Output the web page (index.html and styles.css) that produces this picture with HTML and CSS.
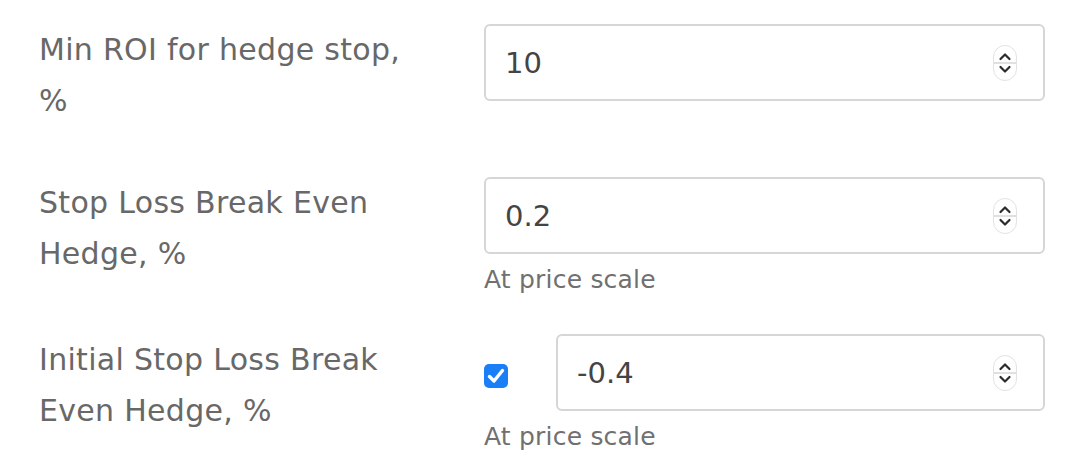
FILE: index.html
```html
<!DOCTYPE html>
<html lang="en">
<head>
<meta charset="utf-8">
<title>Hedge settings</title>
<link rel="stylesheet" href="styles.css">
</head>
<body>
<div class="form">
  <div class="row">
    <div class="label">Min ROI for hedge stop, %</div>
    <div class="control">
      <div class="field">
        <div class="input">
          <span class="value">10</span>
          <span class="spinner">
            <svg width="24" height="36" viewBox="0 0 24 36"><path d="M7.5 14 L12 9.5 L16.5 14" /><path d="M7.5 22 L12 26.5 L16.5 22" /></svg>
          </span>
        </div>
      </div>
    </div>
  </div>
  <div class="row">
    <div class="label">Stop Loss Break Even Hedge, %</div>
    <div class="control">
      <div class="field">
        <div class="input">
          <span class="value">0.2</span>
          <span class="spinner">
            <svg width="24" height="36" viewBox="0 0 24 36"><path d="M7.5 14 L12 9.5 L16.5 14" /><path d="M7.5 22 L12 26.5 L16.5 22" /></svg>
          </span>
        </div>
      </div>
      <div class="help">At price scale</div>
    </div>
  </div>
  <div class="row">
    <div class="label">Initial Stop Loss Break Even Hedge, %</div>
    <div class="control">
      <div class="field">
        <span class="checkbox">
          <svg width="24" height="24" viewBox="0 0 24 24"><path d="M5.5 12.5 L10 17 L18.5 6.5" /></svg>
        </span>
        <div class="input">
          <span class="value">-0.4</span>
          <span class="spinner">
            <svg width="24" height="36" viewBox="0 0 24 36"><path d="M7.5 14 L12 9.5 L16.5 14" /><path d="M7.5 22 L12 26.5 L16.5 22" /></svg>
          </span>
        </div>
      </div>
      <div class="help">At price scale</div>
    </div>
  </div>
</div>
</body>
</html>
```
FILE: styles.css
```css
html, body {
  margin: 0;
  padding: 0;
  background: #ffffff;
}

body {
  font-family: "DejaVu Sans", "Noto Sans", sans-serif;
  color: #5e5e5e;
}

.form {
  padding: 24px 35px 0 39px;
}

.row {
  display: flex;
  margin-bottom: 36px;
}

.label {
  width: 378px;
  flex: none;
  margin-right: 67px;
  font-size: 30px;
  letter-spacing: 0.3px;
  line-height: 51px;
  padding-bottom: 15px;
  color: #686868;
}

.control {
  flex: 1;
  display: flex;
  flex-direction: column;
}

.field {
  display: flex;
  align-items: center;
}

.input {
  flex: 1;
  height: 77px;
  box-sizing: border-box;
  border: 2px solid #d5d6d8;
  border-radius: 6px;
  display: flex;
  align-items: center;
  padding: 0 26px 0 19px;
}

.value {
  flex: 1;
  font-size: 29px;
  color: #444444;
}

.spinner {
  width: 24px;
  height: 36px;
  box-sizing: border-box;
  border: 1px solid #e2e2e2;
  border-radius: 12px;
  display: flex;
  position: relative;
}

.spinner::after {
  content: "";
  position: absolute;
  left: 0;
  right: 0;
  top: 16px;
  height: 2px;
  background: #e0e0e0;
}

.spinner svg {
  position: relative;
  z-index: 1;
  margin: -1px;
  fill: none;
  stroke: #2b2b2b;
  stroke-width: 2.2;
  stroke-linecap: round;
  stroke-linejoin: round;
}

.checkbox {
  width: 24px;
  height: 24px;
  flex: none;
  border-radius: 5px;
  background: #1a7ef6;
  margin: 6px 48px 0 0;
  display: flex;
}

.checkbox svg {
  fill: none;
  stroke: #ffffff;
  stroke-width: 3.4;
  stroke-linecap: round;
  stroke-linejoin: round;
}

.help {
  margin-top: 8px;
  font-size: 25px;
  letter-spacing: 0.2px;
  line-height: 36px;
  color: #707070;
}
```
